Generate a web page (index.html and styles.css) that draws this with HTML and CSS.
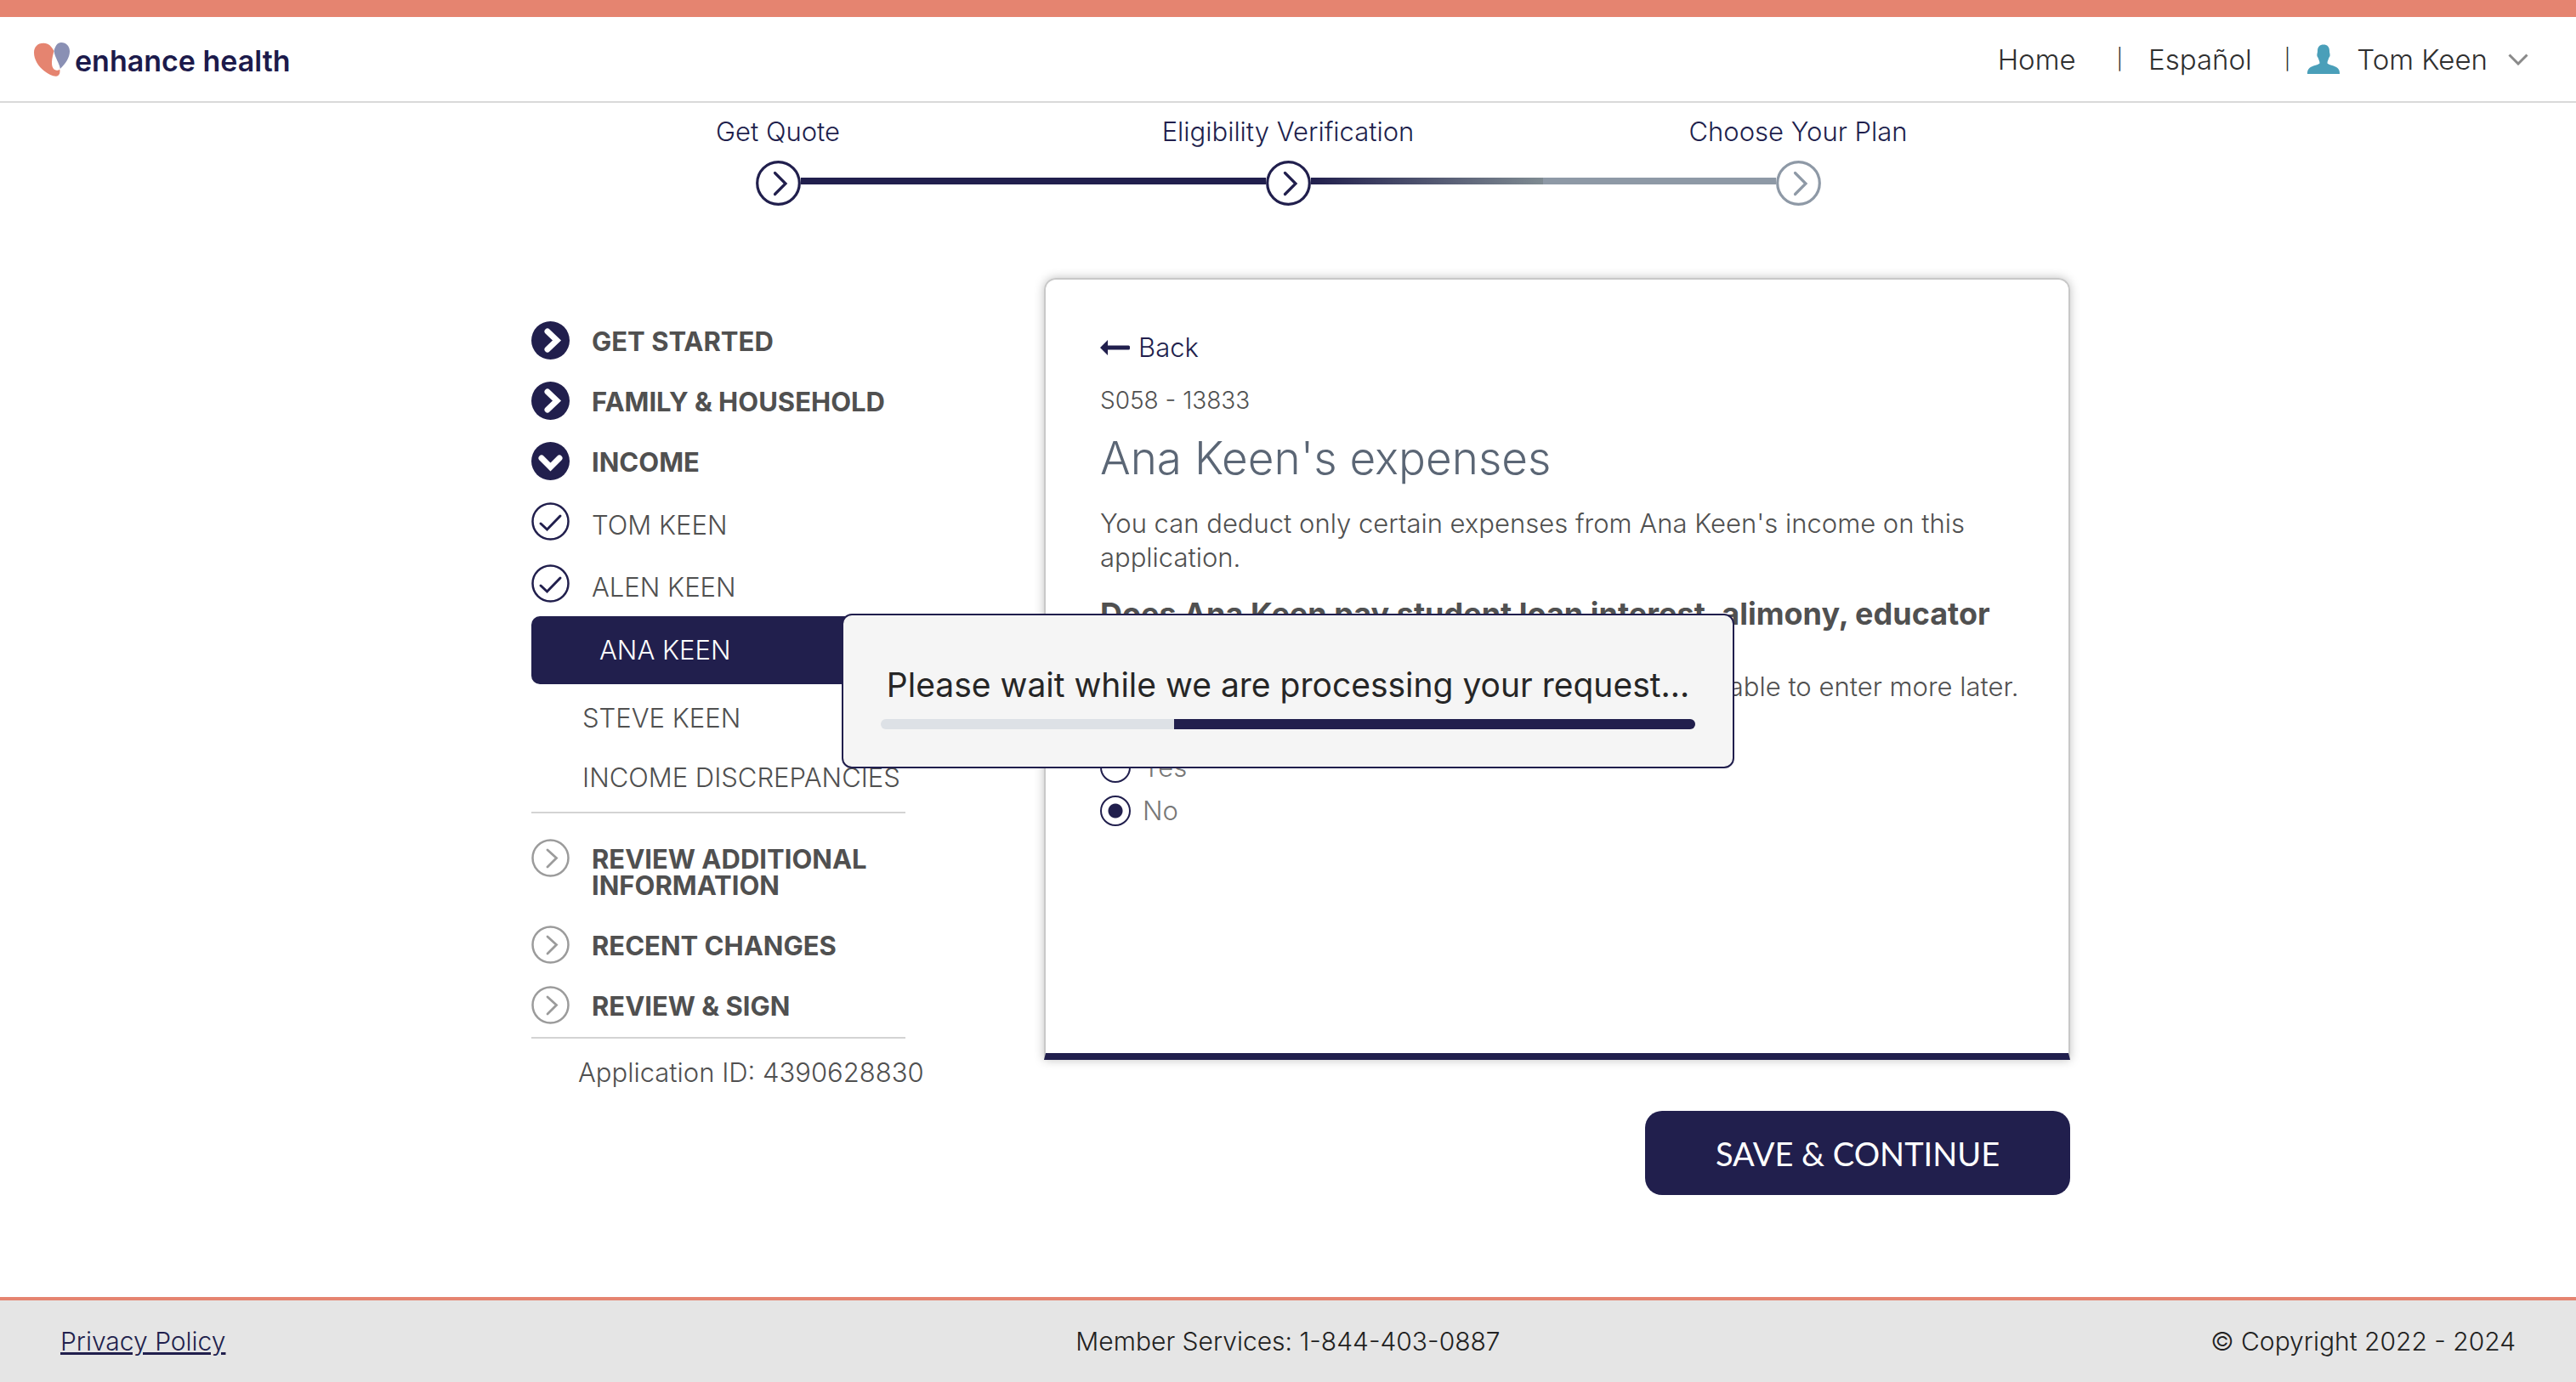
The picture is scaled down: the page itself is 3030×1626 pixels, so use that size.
FILE: index.html
```html
<!DOCTYPE html>
<html lang="en">
<head>
<meta charset="utf-8">
<title>Enhance Health - Ana Keen's expenses</title>
<meta name="viewport" content="width=device-width, initial-scale=1">
<link rel="stylesheet" href="styles.css">
</head>
<body>
<svg class="sprite" aria-hidden="true">
  <symbol id="chevron-solid" viewBox="0 0 45 45"><circle cx="22.500" cy="22.500" r="22.500" fill="currentColor"/><path d="M19 12l11 10.500L19 33" fill="none" stroke="#fff" stroke-width="7" stroke-linecap="round" stroke-linejoin="miter"/></symbol>
  <symbol id="chevron-solid-down" viewBox="0 0 45 45"><circle cx="22.500" cy="22.500" r="22.500" fill="currentColor"/><path d="M12 19l10.500 10.500L33 19" fill="none" stroke="#fff" stroke-width="7" stroke-linecap="round"/></symbol>
  <symbol id="check" viewBox="0 0 45 45"><circle cx="22.500" cy="22.500" r="21" fill="none" stroke="currentColor" stroke-width="2.500"/><path d="M11 25l7.500 7L34 16" fill="none" stroke="currentColor" stroke-width="3" stroke-linecap="round"/></symbol>
  <symbol id="chevron-ring" viewBox="0 0 45 45"><circle cx="22.500" cy="22.500" r="21" fill="none" stroke="currentColor" stroke-width="2.500"/><path d="M19 13l10.500 9.500L19 33" fill="none" stroke="currentColor" stroke-width="2.800" stroke-linecap="round"/></symbol>
  <symbol id="step-ring" viewBox="0 0 53 53"><circle cx="26.500" cy="26.500" r="24.800" fill="#fff" stroke="currentColor" stroke-width="3.200"/><path d="M22.500 14.500L35 27 22.500 39.500" fill="none" stroke="currentColor" stroke-width="3.200" stroke-linecap="round"/></symbol>
</svg>

<header class="site-header">
  <a class="brand" href="#">
    <svg class="brand-mark" viewBox="0 0 42 40" aria-hidden="true"><path d="M23.500 10C20.500 4.500 17 .6 11 .8 4 .8 0 5.500 0 12c0 8 5 16 12 21.500 5 4 10 6.500 14 6.300 3.500-.3 5-3.500 4.300-8.300-1 1-2.300 1.500-4 1.300-3.800-.6-5.600-4.500-5.300-10C21.300 18 22.500 14 23.500 10z" fill="#e58470"/><path d="M23.500 10C25 4 27.500 0 32 0c6 0 10 4.500 10 10.500 0 7-4.500 14-11.200 20.500C30 24 24.500 18 23.500 10z" fill="#8a90b4"/></svg>
    <span class="brand-name">enhance health</span>
  </a>
  <nav class="site-nav">
    <a class="nav-home" href="#">Home</a>
    <span class="divider">|</span>
    <a class="nav-lang" href="#">Español</a>
    <span class="divider">|</span>
    <button class="user-menu" type="button">
      <svg class="user-icon" viewBox="0 0 38 35" aria-hidden="true"><path d="M12 8c0-5 2.500-7.500 7-7.500S26 3 26 8c0 2.500.8 3 .6 5.500-.2 1.500-1.300 2-1.600 3.500-.5 2-1.500 3-1.500 5.500 2.500 2.500 8.500 2.500 12 5.500C38 30 38 33 38 35H0c0-2 0-5 2.500-7 3.500-3 9.500-3 12-5.500 0-2.500-1-3.500-1.500-5.500-.3-1.500-1.400-2-1.600-3.500C11.200 11 12 10.500 12 8z" fill="#4a9fb9"/></svg>
      <span>Tom Keen</span>
      <svg class="caret" viewBox="0 0 24 14" aria-hidden="true"><path d="M1.500 1.500L12 12 22.500 1.500" fill="none" stroke="#8a8a8a" stroke-width="3"/></svg>
    </button>
  </nav>
</header>

<main>
  <ol class="stepper">
    <li class="step">
      <span class="step-label">Get Quote</span>
      <div class="step-track"><span class="rail"></span><svg class="step-icon"><use href="#step-ring"/></svg><span class="rail rail-done"></span></div>
    </li>
    <li class="step">
      <span class="step-label">Eligibility Verification</span>
      <div class="step-track"><span class="rail rail-done"></span><svg class="step-icon"><use href="#step-ring"/></svg><span class="rail rail-fade"></span></div>
    </li>
    <li class="step">
      <span class="step-label">Choose Your Plan</span>
      <div class="step-track"><span class="rail rail-next"></span><svg class="step-icon step-icon-next"><use href="#step-ring"/></svg><span class="rail"></span></div>
    </li>
  </ol>

  <div class="layout">
    <aside class="sidebar">
      <ul class="menu menu-main">
        <li><a class="item section" href="#"><svg class="icon"><use href="#chevron-solid"/></svg><span>GET STARTED</span></a></li>
        <li><a class="item section" href="#"><svg class="icon"><use href="#chevron-solid"/></svg><span>FAMILY &amp; HOUSEHOLD</span></a></li>
        <li><a class="item section" href="#"><svg class="icon"><use href="#chevron-solid-down"/></svg><span>INCOME</span></a></li>
        <li><a class="item member" href="#"><svg class="icon"><use href="#check"/></svg><span>TOM KEEN</span></a></li>
        <li><a class="item member member-last" href="#"><svg class="icon"><use href="#check"/></svg><span>ALEN KEEN</span></a></li>
        <li><a class="current" href="#" aria-current="page">ANA KEEN</a></li>
        <li><a class="sub" href="#">STEVE KEEN</a></li>
        <li><a class="sub" href="#">INCOME DISCREPANCIES</a></li>
      </ul>
      <ul class="menu menu-next">
        <li><a class="item section pending" href="#"><svg class="icon"><use href="#chevron-ring"/></svg><span>REVIEW ADDITIONAL INFORMATION</span></a></li>
        <li><a class="item section pending" href="#"><svg class="icon"><use href="#chevron-ring"/></svg><span>RECENT CHANGES</span></a></li>
        <li><a class="item section pending" href="#"><svg class="icon"><use href="#chevron-ring"/></svg><span>REVIEW &amp; SIGN</span></a></li>
      </ul>
      <p class="app-id">Application ID: 4390628830</p>
    </aside>

    <form class="content">
      <section class="card">
        <a class="back" href="#"><svg class="back-icon" viewBox="0 0 35 18" aria-hidden="true"><path d="M0 9L9 0v6.500h24.500q1.500 0 1.500 1.500v2q0 1.500-1.500 1.500H9V18z" fill="currentColor"/></svg><span>Back</span></a>
        <p class="code">S058 - 13833</p>
        <h1>Ana Keen's expenses</h1>
        <p class="intro">You can deduct only certain expenses from Ana Keen's income on this application.</p>
        <fieldset>
          <legend>Does Ana Keen pay student loan interest, alimony, educator expenses?</legend>
          <p class="hint">Select Yes if there are any expenses now. You'll be able to enter more later.</p>
          <label class="choice"><input type="radio" name="expenses" value="yes"><span>Yes</span></label>
          <label class="choice"><input type="radio" name="expenses" value="no" checked><span>No</span></label>
        </fieldset>
      </section>
      <button class="save" type="button">SAVE &amp; CONTINUE</button>
    </form>
  </div>
</main>

<footer class="site-footer">
  <a href="#">Privacy Policy</a>
  <span>Member Services: 1-844-403-0887</span>
  <span class="copyright">© Copyright 2022 - 2024</span>
</footer>

<div class="wait" role="alertdialog" aria-label="Processing">
  <p>Please wait while we are processing your request...</p>
  <div class="progress"><div class="progress-fill" style="width:64%"></div></div>
</div>
</body>
</html>
```
FILE: styles.css
```css
:root {
  --navy: #211f4d;
  --coral: #e58470;
  --text: #505050;
  --rule: #d3d3d3;
}

* { box-sizing: border-box; }

body {
  margin: 0;
  min-height: 100vh;
  display: flex;
  flex-direction: column;
  background: #fff;
  color: var(--text);
  font-family: Inter, "Liberation Sans", sans-serif;
  font-size: 31px;
  font-weight: 300;
  line-height: 40px;
}

p, h1, ul, ol, fieldset, legend { margin: 0; padding: 0; }
ul, ol { list-style: none; }
a { color: inherit; text-decoration: none; }
button { font: inherit; color: inherit; border: 0; padding: 0; background: none; cursor: pointer; }
.sprite { display: none; }
main { flex: 1; }

/* Header */
.site-header {
  display: flex;
  align-items: center;
  justify-content: space-between;
  height: 121px;
  padding: 0 56px 0 40px;
  border-top: 20px solid var(--coral);
  border-bottom: 2px solid #d9d9d9;
}
.brand { display: flex; align-items: center; gap: 6px; }
.brand-mark { width: 42px; height: 40px; }
.brand-name {
  padding-top: 4px;
  color: #1c1a4b;
  font-size: 34px;
  font-weight: 600;
}
.site-nav { display: flex; align-items: center; color: #2f2f2f; font-size: 33px; }
.divider { font-size: 24px; }
.nav-home { margin-right: 48px; }
.nav-lang { margin: 0 38px 0 30px; }
.user-menu { display: flex; align-items: center; margin-left: 20px; }
.user-icon { width: 38px; height: 35px; margin-right: 20px; }
.caret { width: 24px; height: 14px; margin-left: 24px; }

/* Progress steps */
.stepper {
  display: grid;
  grid-template-columns: repeat(3, 1fr);
  max-width: 1800px;
  margin: 0 auto;
  padding-top: 14px;
}
.step { text-align: center; color: var(--navy); }
.step-label { display: block; margin-bottom: 14px; }
.step-track { display: flex; align-items: center; }
.step-icon { flex: none; width: 53px; height: 53px; }
.step-icon-next { color: #8e99a6; }
.rail { flex: 1; height: 8px; margin-bottom: 6px; }
.rail-done { background: var(--navy); }
.rail-fade { background: linear-gradient(to right, var(--navy), #7f8b92); }
.rail-next { background: #8e99a6; }

/* Two-column layout */
.layout {
  display: grid;
  grid-template-columns: 440px minmax(0, 1207px);
  justify-content: space-between;
  max-width: 1840px;
  margin: 0 auto;
  padding: 85px 0 118px 30px;
}

/* Sidebar */
.sidebar { padding-top: 51px; }
.menu { border-bottom: 2px solid var(--rule); }
.menu-main { padding-bottom: 5px; }
.menu-next { padding-top: 30px; }
.item { display: flex; align-items: flex-start; gap: 26px; min-height: 71px; }
.icon { flex: none; width: 45px; height: 45px; color: var(--navy); }
.section { font-weight: 700; line-height: 31px; }
.section span { padding-top: 8px; }
.member { min-height: 73px; }
.member span { padding-top: 7px; }
.member-last { min-height: 61px; }
.pending .icon { color: #9b9b9b; }
.current {
  display: block;
  height: 80px;
  margin-bottom: 5px;
  padding-left: 80px;
  border-radius: 10px;
  background: var(--navy);
  color: #fff;
  line-height: 80px;
}
.sub { display: block; padding-left: 60px; line-height: 70px; white-space: nowrap; }
.menu-next li:first-child { margin-bottom: 31px; }
.menu-next li:last-child .item { min-height: 60px; }
.app-id { padding: 20px 0 0 55px; white-space: nowrap; }

/* Question card */
.content { display: flex; flex-direction: column; align-items: flex-end; gap: 60px; }
.card {
  width: 100%;
  min-height: 920px;
  padding: 60px 58px 40px 64px;
  border: 2px solid #c8c8c8;
  border-bottom: 8px solid var(--navy);
  border-radius: 14px 14px 0 0;
  box-shadow: 0 0 12px rgba(0, 0, 0, .25);
}
.back { display: flex; align-items: center; gap: 10px; color: var(--navy); }
.back-icon { width: 35px; height: 18px; }
.code { margin-top: 22px; font-size: 28px; }
h1 {
  margin-top: 18px;
  color: #5b6675;
  font-size: 53px;
  font-weight: 300;
  line-height: 60px;
}
.intro { margin-top: 27px; }
fieldset { border: 0; min-width: 0; padding-top: 26px; }
legend { float: left; width: 100%; font-size: 36px; font-weight: 700; }
.hint { clear: both; padding-top: 6px; white-space: nowrap; }
.choice { display: flex; align-items: center; gap: 14px; height: 51px; color: #777; }
.hint + .choice { margin-top: 49px; }
.choice input {
  appearance: none;
  width: 36px;
  height: 36px;
  margin: 0;
  border: 2px solid var(--navy);
  border-radius: 50%;
}
.choice input:checked { background: radial-gradient(circle, var(--navy) 8px, transparent 9px); }

.save {
  width: 500px;
  height: 99px;
  border-radius: 20px;
  background: var(--navy);
  color: #fff;
  font-family: Lato, sans-serif;
  font-size: 38px;
  font-weight: 400;
}

/* Footer */
.site-footer {
  display: grid;
  grid-template-columns: 1fr auto 1fr;
  align-items: center;
  height: 100px;
  padding: 0 71px;
  border-top: 4px solid var(--coral);
  background: #e5e5e5;
  color: #212121;
  font-size: 30px;
}
.site-footer a { color: var(--navy); text-decoration: underline; }
.copyright { text-align: right; }

/* Processing dialog */
.wait {
  position: fixed;
  top: 50%;
  left: 50%;
  transform: translate(-50%, -50%);
  min-width: 1050px;
  padding: 62px 44px 44px;
  border: 2px solid var(--navy);
  border-radius: 12px;
  background: #f5f5f5;
  color: #262626;
  font-size: 39px;
  font-weight: 400;
  text-align: center;
  white-space: nowrap;
}
.progress {
  display: flex;
  justify-content: flex-end;
  height: 12px;
  margin-top: 20px;
  border-radius: 6px;
  background: #dde1e6;
  overflow: hidden;
}
.progress-fill { background: var(--navy); }
```
